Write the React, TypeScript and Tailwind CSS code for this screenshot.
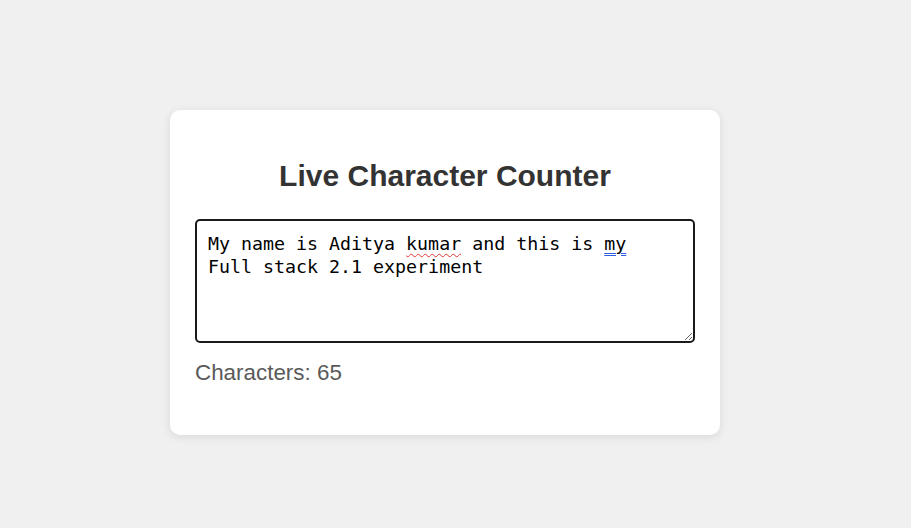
import React, { useState } from 'react';

const initialText = 'My name is Aditya kumar and this is my \nFull stack 2.1 experiment';

export default function App() {
  const [text, setText] = useState(initialText);

  return (
    <div className="min-h-screen bg-[#f0f0f0] pl-[170px] pt-[110px] font-['Liberation_Sans',Arial,sans-serif]">
      <div className="w-[550px] rounded-[10px] bg-white px-[25px] pt-[49px] pb-[49px] shadow-[0_2px_10px_rgba(0,0,0,0.1)]">
        <h2 className="text-center text-[30px] font-bold leading-[34px] text-[#333]">Live Character Counter</h2>

        <div className="relative mt-[26px] h-[124px]">
          <textarea
            value={text}
            onChange={(e) => setText(e.target.value)}
            className="block h-full w-full rounded-[5px] border-2 border-[#1a1a1a] bg-transparent px-[11px] py-[11px] font-['DejaVu_Sans_Mono','Liberation_Mono',monospace] text-[18.3px] leading-[23px] text-black outline-none"
          />
          {text === initialText && (
            <div
              aria-hidden
              className="pointer-events-none absolute inset-0 whitespace-pre border-2 border-transparent px-[11px] py-[11px] font-['DejaVu_Sans_Mono','Liberation_Mono',monospace] text-[18.3px] leading-[23px] text-transparent"
            >
              {'My name is Aditya '}
              <span className="underline decoration-[#e53935] decoration-wavy decoration-1 underline-offset-[3px]">kumar</span>
              {' and this is '}
              <span className="underline decoration-[#2f5fe0] decoration-double decoration-1 underline-offset-[3px]">my</span>
            </div>
          )}
        </div>

        <p className="mt-[17px] text-[22.4px] leading-[26px] text-[#5a5a5a]">Characters: {text.length}</p>
      </div>
    </div>
  );
}
